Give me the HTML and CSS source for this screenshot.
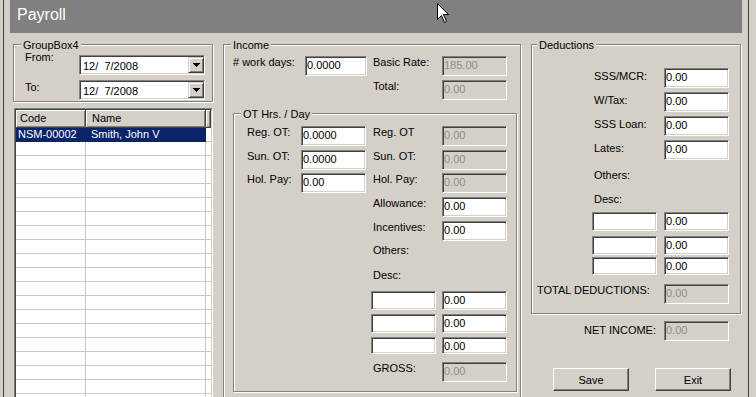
FILE: index.html
```html
<!DOCTYPE html>
<html>
<head>
<meta charset="utf-8">
<title>Payroll</title>
<link rel="stylesheet" href="styles.css">
</head>
<body>
<div class="window">
  <div class="titlebar">Payroll</div>
  <div class="main">
    <div class="col-left">
      <fieldset class="gb gb-dates">
        <legend>GroupBox4</legend>
        <div class="dates-body">
          <div class="date-row">
            <span class="lbl lbl-from">From:</span>
            <div class="combo"><span class="combo-text">12/&nbsp; 7/2008</span><span class="combo-btn"><svg class="tri" width="7" height="4" viewBox="0 0 7 4"><path d="M0 0h7L3.5 4z"/></svg></span></div>
          </div>
          <div class="date-row">
            <span class="lbl lbl-to">To:</span>
            <div class="combo"><span class="combo-text">12/&nbsp; 7/2008</span><span class="combo-btn"><svg class="tri" width="7" height="4" viewBox="0 0 7 4"><path d="M0 0h7L3.5 4z"/></svg></span></div>
          </div>
        </div>
      </fieldset>
      <div class="listview">
        <div class="lv-inner">
          <div class="lv-head"><div class="lv-hc c-code">Code</div><div class="lv-hc c-name">Name</div><div class="lv-hc c-rest"></div></div>
          <div class="lv-row sel"><div class="lv-c c-code">NSM-00002</div><div class="lv-c c-name">Smith, John V</div><div class="lv-c c-rest"></div></div>
          <div class="lv-row"><div class="lv-c c-code"></div><div class="lv-c c-name"></div><div class="lv-c c-rest"></div></div>
          <div class="lv-row"><div class="lv-c c-code"></div><div class="lv-c c-name"></div><div class="lv-c c-rest"></div></div>
          <div class="lv-row"><div class="lv-c c-code"></div><div class="lv-c c-name"></div><div class="lv-c c-rest"></div></div>
          <div class="lv-row"><div class="lv-c c-code"></div><div class="lv-c c-name"></div><div class="lv-c c-rest"></div></div>
          <div class="lv-row"><div class="lv-c c-code"></div><div class="lv-c c-name"></div><div class="lv-c c-rest"></div></div>
          <div class="lv-row"><div class="lv-c c-code"></div><div class="lv-c c-name"></div><div class="lv-c c-rest"></div></div>
          <div class="lv-row"><div class="lv-c c-code"></div><div class="lv-c c-name"></div><div class="lv-c c-rest"></div></div>
          <div class="lv-row"><div class="lv-c c-code"></div><div class="lv-c c-name"></div><div class="lv-c c-rest"></div></div>
          <div class="lv-row"><div class="lv-c c-code"></div><div class="lv-c c-name"></div><div class="lv-c c-rest"></div></div>
          <div class="lv-row"><div class="lv-c c-code"></div><div class="lv-c c-name"></div><div class="lv-c c-rest"></div></div>
          <div class="lv-row"><div class="lv-c c-code"></div><div class="lv-c c-name"></div><div class="lv-c c-rest"></div></div>
          <div class="lv-row"><div class="lv-c c-code"></div><div class="lv-c c-name"></div><div class="lv-c c-rest"></div></div>
          <div class="lv-row"><div class="lv-c c-code"></div><div class="lv-c c-name"></div><div class="lv-c c-rest"></div></div>
          <div class="lv-row"><div class="lv-c c-code"></div><div class="lv-c c-name"></div><div class="lv-c c-rest"></div></div>
          <div class="lv-row"><div class="lv-c c-code"></div><div class="lv-c c-name"></div><div class="lv-c c-rest"></div></div>
          <div class="lv-row"><div class="lv-c c-code"></div><div class="lv-c c-name"></div><div class="lv-c c-rest"></div></div>
          <div class="lv-row"><div class="lv-c c-code"></div><div class="lv-c c-name"></div><div class="lv-c c-rest"></div></div>
          <div class="lv-row"><div class="lv-c c-code"></div><div class="lv-c c-name"></div><div class="lv-c c-rest"></div></div>
          <div class="lv-row"><div class="lv-c c-code"></div><div class="lv-c c-name"></div><div class="lv-c c-rest"></div></div>
        </div>
      </div>
    </div>

    <fieldset class="gb gb-income">
      <legend>Income</legend>
      <div class="income-body">
        <div class="row">
          <span class="lbl w-days">#&nbsp;work days:</span>
          <input class="tb tb-days" value="0.0000">
          <span class="lbl w-rlbl gap-l">Basic Rate:</span>
          <input class="tb dis" value="185.00" disabled>
        </div>
        <div class="row mt4">
          <span class="lbl w-rlbl indent-total">Total:</span>
          <input class="tb dis" value="0.00" disabled>
        </div>

        <fieldset class="gb gb-ot">
          <legend>OT Hrs. / Day</legend>
          <div class="ot-body">
            <div class="ot-left">
              <div class="row"><span class="lbl w-otlbl">Reg. OT:</span><input class="tb" value="0.0000"></div>
              <div class="row mt4"><span class="lbl w-otlbl">Sun. OT:</span><input class="tb" value="0.0000"></div>
              <div class="row mt3"><span class="lbl w-otlbl">Hol. Pay:</span><input class="tb" value="0.00"></div>
            </div>
            <div class="ot-right">
              <div class="row"><span class="lbl w-rlbl">Reg. OT</span><input class="tb dis" value="0.00" disabled></div>
              <div class="row mt4"><span class="lbl w-rlbl">Sun. OT:</span><input class="tb dis" value="0.00" disabled></div>
              <div class="row mt3"><span class="lbl w-rlbl">Hol. Pay:</span><input class="tb dis" value="0.00" disabled></div>
              <div class="row mt4"><span class="lbl w-rlbl">Allowance:</span><input class="tb" value="0.00"></div>
              <div class="row mt4"><span class="lbl w-rlbl">Incentives:</span><input class="tb" value="0.00"></div>
              <div class="lbl mt3">Others:</div>
              <div class="lbl mt12">Desc:</div>
              <div class="row desc-row mt9"><input class="tb tb-desc"><input class="tb tb-desc" value="0.00"></div>
              <div class="row desc-row mt4"><input class="tb tb-desc"><input class="tb tb-desc" value="0.00"></div>
              <div class="row desc-row mt4"><input class="tb tb-desc short"><input class="tb tb-desc short" value="0.00"></div>
              <div class="row mt8"><span class="lbl w-rlbl">GROSS:</span><input class="tb dis" value="0.00" disabled></div>
            </div>
          </div>
        </fieldset>
      </div>
    </fieldset>

    <div class="col-right">
      <fieldset class="gb gb-deduct">
        <legend>Deductions</legend>
        <div class="deduct-body">
          <div class="drow"><span class="lbl dlbl">SSS/MCR:</span><input class="tb" value="0.00"></div>
          <div class="drow mt4"><span class="lbl dlbl">W/Tax:</span><input class="tb" value="0.00"></div>
          <div class="drow mt4"><span class="lbl dlbl">SSS Loan:</span><input class="tb" value="0.00"></div>
          <div class="drow mt4"><span class="lbl dlbl">Lates:</span><input class="tb" value="0.00"></div>
          <div class="lbl dtext mt9">Others:</div>
          <div class="lbl dtext mt11">Desc:</div>
          <div class="drow ddesc mt6"><input class="tb tb-desc"><input class="tb tb-desc" value="0.00"></div>
          <div class="drow ddesc mt5"><input class="tb tb-desc"><input class="tb tb-desc" value="0.00"></div>
          <div class="drow ddesc mt2"><input class="tb tb-desc mid"><input class="tb tb-desc mid" value="0.00"></div>
          <div class="drow mt9"><span class="lbl total-lbl">TOTAL DEDUCTIONS:</span><input class="tb dis" value="0.00" disabled></div>
        </div>
      </fieldset>
      <div class="net-row">
        <span class="lbl net-lbl">NET INCOME:</span>
        <input class="tb dis" value="0.00" disabled>
      </div>
      <div class="buttons">
        <button class="btn" type="button">Save</button>
        <button class="btn" type="button">Exit</button>
      </div>
    </div>
  </div>

  <svg class="cursor" width="13" height="21" viewBox="0 0 13 21"><path d="M0.5 0.5V16.5L4.5 12.5L7.5 19.5L9.5 18.5L6.5 11.5H11.5Z" fill="#fff" stroke="#000" stroke-linejoin="miter"/></svg>
</div>
</body>
</html>
```

FILE: styles.css
```css
* { box-sizing: border-box; }
html, body { margin: 0; padding: 0; }
body {
  width: 756px;
  height: 397px;
  overflow: hidden;
  background: #d4d0c8;
  font-family: "Liberation Sans", Arial, sans-serif;
  font-size: 11px;
  color: #000;
}

.window {
  position: relative;
  margin-left: 3px;
  width: 746px;
  height: 397px;
  border-left: 1px solid #404040;
  border-right: 1px solid #404040;
  overflow: hidden;
}

.titlebar {
  margin-left: 6px;
  width: 732px;
  height: 33px;
  background: #808080;
  color: #fff;
  font-size: 16px;
  line-height: 29px;
  padding-left: 7px;
}

.main {
  display: flex;
  align-items: flex-start;
  padding-left: 9px;
}

/* Group boxes (etched frame) */
.gb {
  margin: 0;
  padding: 0;
  min-width: 0;
  border: 1px solid #808080;
  box-shadow: inset 1px 1px 0 #fff, 1px 1px 0 #fff;
}
.gb > legend {
  margin-left: 7px;
  padding: 2px 2px 0;
  line-height: 13px;
  background: #d4d0c8;
}

.lbl { line-height: 13px; white-space: nowrap; flex: none; }
.row { display: flex; align-items: flex-start; }
.mt2 { margin-top: 2px; }
.mt3 { margin-top: 3px; }
.mt4 { margin-top: 4px; }
.mt5 { margin-top: 5px; }
.mt6 { margin-top: 6px; }
.mt8 { margin-top: 8px; }
.mt9 { margin-top: 9px; }
.mt11 { margin-top: 11px; }
.mt12 { margin-top: 12px; }

/* Text boxes */
.tb {
  flex: none;
  display: block;
  width: 65px;
  height: 20px;
  margin: 0;
  padding: 0 0 2px 1px;
  font: inherit;
  color: #000;
  background: #fff;
  border: 1px solid;
  border-color: #808080 #fff #fff #808080;
  box-shadow: inset 1px 1px 0 #404040, inset -1px -1px 0 #d4d0c8;
  outline: none;
  border-radius: 0;
}
.tb.dis { background: #d4d0c8; color: #8e8e8e; -webkit-text-fill-color: #8e8e8e; }
.tb-desc { height: 19px; padding-bottom: 1px; }
.tb-desc.short { height: 17px; padding-bottom: 0; }
.tb-desc.mid { height: 18px; padding-bottom: 1px; }

/* Left column */
.col-left { flex: none; width: 200px; margin-top: 4px; }
.dates-body { padding: 3px 0 1px 11px; }
.date-row { display: flex; align-items: flex-start; height: 20px; }
.date-row + .date-row { margin-top: 5px; }
.date-row .lbl { width: 54px; }
.lbl-from { margin-top: -4px; }
.lbl-to { margin-top: 1px; }

.combo {
  display: flex;
  align-items: center;
  justify-content: space-between;
  width: 126px;
  height: 20px;
  padding-left: 3px;
  background: #fff;
  border: 1px solid;
  border-color: #808080 #fff #fff #808080;
  box-shadow: inset 1px 1px 0 #404040, inset -1px -1px 0 #d4d0c8;
}
.combo-text { align-self: flex-end; line-height: 13px; margin-bottom: 1px; }
.combo-btn {
  display: flex;
  align-items: center;
  justify-content: center;
  width: 16px;
  height: 16px;
  background: #d4d0c8;
  border: 1px solid;
  border-color: #d4d0c8 #404040 #404040 #d4d0c8;
  box-shadow: inset 1px 1px 0 #fff, inset -1px -1px 0 #808080;
}
.tri { display: block; shape-rendering: crispEdges; }

.listview {
  margin: 6px 0 0 1px;
  width: 199px;
  height: 300px;
  border: 1px solid;
  border-color: #808080 #fff #fff #808080;
}
.lv-inner {
  height: 100%;
  background: #fff;
  border: 1px solid;
  border-color: #404040 #d4d0c8 #d4d0c8 #404040;
  overflow: hidden;
}
.lv-head, .lv-row { display: flex; }
.lv-hc {
  flex: none;
  height: 18px;
  line-height: 16px;
  padding-left: 4px;
  background: #d4d0c8;
  border-right: 1px solid #404040;
  border-bottom: 1px solid #404040;
  box-shadow: inset 1px 1px 0 #fff, inset -1px -1px 0 #808080;
}
.lv-hc.c-name { padding-left: 6px; }
.c-code { width: 70px; }
.c-name { width: 120px; }
.c-rest { flex: 1 1 auto; }
.lv-c {
  flex: none;
  height: 14px;
  line-height: 13px;
  white-space: nowrap;
  border-right: 1px solid #c8c8c8;
  border-bottom: 1px solid #c8c8c8;
}
.lv-c.c-code { padding-left: 2px; }
.lv-c.c-name { padding-left: 5px; }
.lv-c.c-rest { flex: 1 1 auto; border-right: none; }
.lv-row.sel .c-code, .lv-row.sel .c-name { background: #0a246a; color: #fff; border-color: #0a246a; }

/* Income */
.gb-income { flex: none; width: 298px; height: 372px; margin: 4px 0 0 10px; }
.income-body { padding: 4px 0 0 9px; }
.w-days { width: 72px; }
.tb-days { width: 62px; }
.w-rlbl { width: 69px; }
.gap-l { margin-left: 6px; }
.indent-total { margin-left: 140px; }

.gb-ot { width: 284px; margin-top: 6px; }
.ot-body { display: flex; align-items: flex-start; padding: 5px 0 9px 13px; }
.ot-left { flex: none; width: 119px; }
.ot-right { flex: none; width: 134px; margin-left: 7px; }
.w-otlbl { width: 54px; }
.desc-row { margin-left: -2px; gap: 6px; }

/* Deductions */
.col-right { flex: none; width: 210px; margin: 4px 0 0 10px; }
.gb-deduct { width: 210px; }
.gb-deduct > legend { margin-left: 5px; }
.deduct-body { padding: 16px 11px 9px 0; }
.drow { display: flex; justify-content: flex-end; align-items: flex-start; }
.dlbl { width: 70px; margin-top: 2px; }
.dtext { margin-left: 62px; }
.ddesc { gap: 7px; }
.total-lbl { width: 127px; }

.net-row {
  display: flex;
  justify-content: flex-end;
  align-items: flex-start;
  margin-top: 7px;
  padding-right: 12px;
}
.net-lbl { margin: 3px 8px 0 0; }

.buttons { display: flex; gap: 26px; margin-top: 27px; padding-left: 22px; }
.btn {
  width: 76px;
  height: 23px;
  margin: 0;
  padding: 0;
  font: inherit;
  color: #000;
  background: #d4d0c8;
  border: 1px solid;
  border-color: #fff #404040 #404040 #fff;
  box-shadow: inset -1px -1px 0 #808080, inset 1px 1px 0 #d4d0c8;
  border-radius: 0;
}

.cursor { position: absolute; left: 433px; top: 3px; }
```
